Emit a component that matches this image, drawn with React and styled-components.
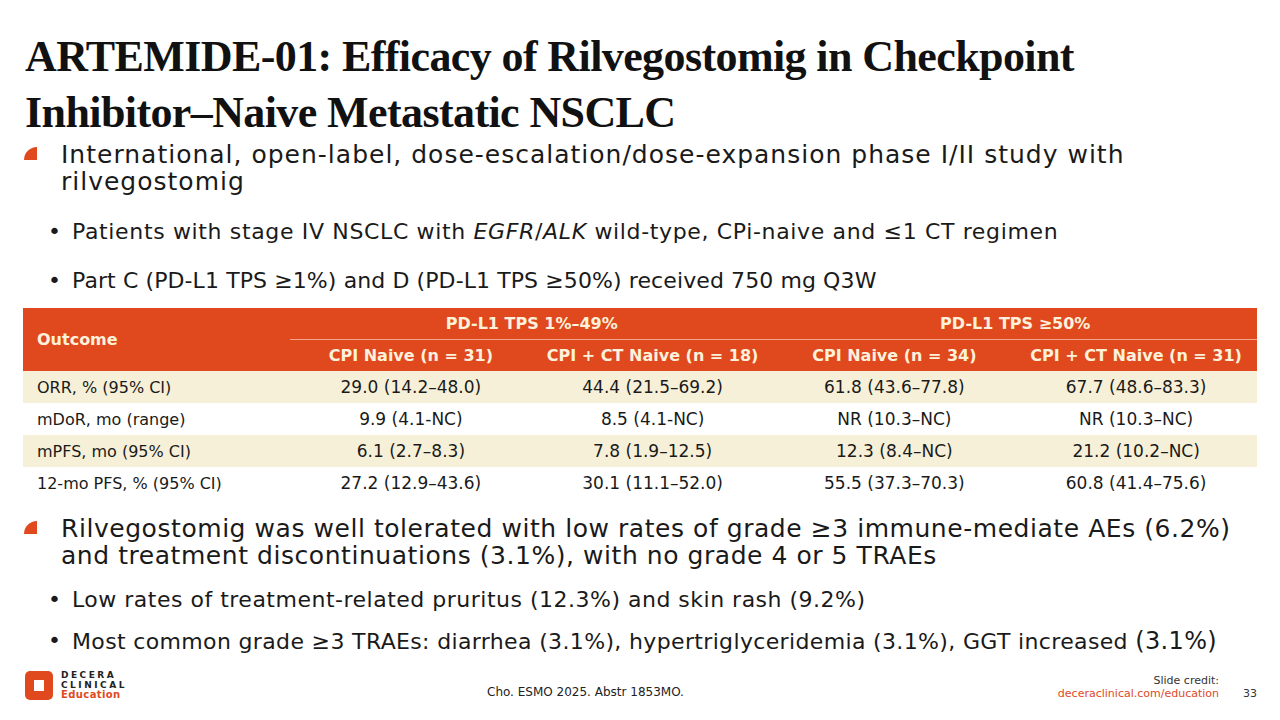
import React from 'react'
import styled, { createGlobalStyle } from 'styled-components'

const GlobalStyle = createGlobalStyle`
  html, body {
    margin: 0;
    padding: 0;
    background: #fff;
  }
`

const ORANGE = '#e0491e'
const CREAM = '#f7f0d8'
const SANS = `'DejaVu Sans', 'Open Sans', sans-serif`

const Slide = styled.div`
  width: 1280px;
  height: 720px;
  box-sizing: border-box;
  padding: 29px 23px 0 23px;
  display: flex;
  flex-direction: column;
  font-family: ${SANS};
  color: #1a1a1a;
  overflow: hidden;
`

const Title = styled.h1`
  margin: 0 0 0 2px;
  font-family: 'Liberation Serif', 'Times New Roman', serif;
  font-weight: bold;
  font-size: 44px;
  line-height: 56px;
  letter-spacing: -0.6px;
  color: #111;
`

const MainPoint = styled.div`
  display: flex;
  align-items: flex-start;
  font-size: 25px;
  line-height: 27px;
  letter-spacing: ${(p) => p.$spacing ?? 0.55}px;
  padding-right: 8px;
  margin-top: ${(p) => p.$top}px;
`

const Marker = styled.span`
  flex: none;
  width: 13px;
  height: 13px;
  margin: 6px 24px 0 1px;
  background: ${ORANGE};
  border-top-left-radius: 100%;
`

const SubPoint = styled.div`
  display: flex;
  align-items: flex-start;
  font-size: 22px;
  line-height: 26px;
  letter-spacing: ${(p) => p.$spacing ?? 0.4}px;
  padding-left: 25px;
  margin-top: ${(p) => p.$top}px;

  &::before {
    content: '•';
    width: 24px;
    flex: none;
  }
`

const Bigger = styled.span`
  font-size: 24px;
`

const Table = styled.table`
  margin-top: ${(p) => p.$top}px;
  width: 1234px;
  border-collapse: collapse;
  table-layout: fixed;
  font-size: 17px;
`

const HeadCell = styled.th`
  background: ${ORANGE};
  color: #fdf1dc;
  font-weight: bold;
  font-size: 16px;
  height: 31px;
  padding: 0;
  text-align: center;
  vertical-align: middle;
`

const OutcomeHead = styled(HeadCell)`
  text-align: left;
  padding-left: 14px;
`

const GroupHead = styled(HeadCell)`
  border-bottom: 1px solid #f3a58a;
`

const Row = styled.tr`
  background: ${(p) => (p.$shade ? CREAM : '#fff')};
`

const Cell = styled.td`
  height: 32px;
  padding: 0;
  text-align: center;
  vertical-align: middle;
  color: #1a1a1a;
`

const LabelCell = styled(Cell)`
  text-align: left;
  padding-left: 14px;
  font-size: 16px;
`

const Footer = styled.div`
  margin-top: auto;
  height: 56px;
  display: grid;
  grid-template-columns: 464px 1fr auto;
  align-items: end;
  padding-bottom: 20px;
  box-sizing: border-box;
`

const Logo = styled.div`
  display: flex;
  align-items: center;
  gap: 8px;
  margin-left: 2px;
`

const LogoText = styled.div`
  display: flex;
  flex-direction: column;
  font-family: 'DejaVu Sans', sans-serif;
  font-size: 9px;
  line-height: 10px;
  font-weight: bold;
  letter-spacing: 2.5px;
  color: #222;
`

const LogoEdu = styled.span`
  color: ${ORANGE};
  letter-spacing: 0.4px;
  font-size: 10px;
`

const Citation = styled.div`
  font-size: 12px;
  color: #222;
  margin-bottom: 1px;
  white-space: nowrap;
`

const Credit = styled.div`
  display: flex;
  align-items: flex-end;
  gap: 24px;
  font-size: 11px;
  line-height: 13px;
  color: #333;
`

const CreditText = styled.div`
  text-align: right;
`

const CreditLink = styled.div`
  color: ${ORANGE};
`

const rows = [
  ['ORR, % (95% CI)', '29.0 (14.2–48.0)', '44.4 (21.5–69.2)', '61.8 (43.6–77.8)', '67.7 (48.6–83.3)'],
  ['mDoR, mo (range)', '9.9 (4.1-NC)', '8.5 (4.1-NC)', 'NR (10.3–NC)', 'NR (10.3–NC)'],
  ['mPFS, mo (95% CI)', '6.1 (2.7–8.3)', '7.8 (1.9–12.5)', '12.3 (8.4–NC)', '21.2 (10.2–NC)'],
  ['12-mo PFS, % (95% CI)', '27.2 (12.9–43.6)', '30.1 (11.1–52.0)', '55.5 (37.3–70.3)', '60.8 (41.4–75.6)'],
]

function LogoMark() {
  return (
    <svg width="28" height="29" viewBox="0 0 28 29">
      <g fill={ORANGE}>
        <circle cx="5" cy="5" r="5" />
        <circle cx="23" cy="5" r="5" />
        <circle cx="5" cy="24" r="5" />
        <circle cx="23" cy="24" r="5" />
        <rect x="5" y="0" width="18" height="9" />
        <rect x="5" y="20" width="18" height="9" />
        <rect x="0" y="5" width="9" height="19" rx="2" />
        <rect x="19" y="5" width="9" height="19" rx="2" />
      </g>
      <rect x="10" y="10" width="8" height="9" fill="#fff" />
    </svg>
  )
}

export default function App() {
  return (
    <>
      <GlobalStyle />
      <Slide>
        <Title>
          ARTEMIDE-01: Efficacy of Rilvegostomig in Checkpoint
          <br />
          Inhibitor–Naive Metastatic NSCLC
        </Title>

        <MainPoint $top={0} $spacing={1}>
          <Marker />
          <span>
            International, open-label, dose-escalation/dose-expansion phase I/II study with rilvegostomig
          </span>
        </MainPoint>
        <SubPoint $top={24} $spacing={0.65}>
          <span>
            Patients with stage IV NSCLC with <i>EGFR</i>/<i>ALK</i> wild-type, CPi-naive and ≤1 CT regimen
          </span>
        </SubPoint>
        <SubPoint $top={23} $spacing={0.1}>
          <span>Part C (PD-L1 TPS ≥1%) and D (PD-L1 TPS ≥50%) received 750 mg Q3W</span>
        </SubPoint>

        <Table $top={14}>
          <colgroup>
            <col style={{ width: 267 }} />
            <col />
            <col />
            <col />
            <col />
          </colgroup>
          <thead>
            <tr>
              <OutcomeHead rowSpan={2}>Outcome</OutcomeHead>
              <GroupHead colSpan={2}>PD-L1 TPS 1%–49%</GroupHead>
              <GroupHead colSpan={2}>PD-L1 TPS ≥50%</GroupHead>
            </tr>
            <tr>
              <HeadCell>CPI Naive (n = 31)</HeadCell>
              <HeadCell>CPI + CT Naive (n = 18)</HeadCell>
              <HeadCell>CPI Naive (n = 34)</HeadCell>
              <HeadCell>CPI + CT Naive (n = 31)</HeadCell>
            </tr>
          </thead>
          <tbody>
            {rows.map((r, i) => (
              <Row key={r[0]} $shade={i % 2 === 0}>
                <LabelCell>{r[0]}</LabelCell>
                {r.slice(1).map((v, j) => (
                  <Cell key={j}>{v}</Cell>
                ))}
              </Row>
            ))}
          </tbody>
        </Table>

        <MainPoint $top={16}>
          <Marker />
          <span>
            Rilvegostomig was well tolerated with low rates of grade ≥3 immune-mediate AEs (6.2%) and treatment
            discontinuations (3.1%), with no grade 4 or 5 TRAEs
          </span>
        </MainPoint>
        <SubPoint $top={18} $spacing={0.5}>
          <span>Low rates of treatment-related pruritus (12.3%) and skin rash (9.2%)</span>
        </SubPoint>
        <SubPoint $top={15} $spacing={0.35}>
          <span>
            Most common grade ≥3 TRAEs: diarrhea (3.1%), hypertriglyceridemia (3.1%), GGT increased <Bigger>(3.1%)</Bigger>
          </span>
        </SubPoint>

        <Footer>
          <Logo>
            <LogoMark />
            <LogoText>
              <span>DECERA</span>
              <span>CLINICAL</span>
              <LogoEdu>Education</LogoEdu>
            </LogoText>
          </Logo>
          <Citation>Cho. ESMO 2025. Abstr 1853MO.</Citation>
          <Credit>
            <CreditText>
              <div>Slide credit:</div>
              <CreditLink>deceraclinical.com/education</CreditLink>
            </CreditText>
            <span>33</span>
          </Credit>
        </Footer>
      </Slide>
    </>
  )
}
